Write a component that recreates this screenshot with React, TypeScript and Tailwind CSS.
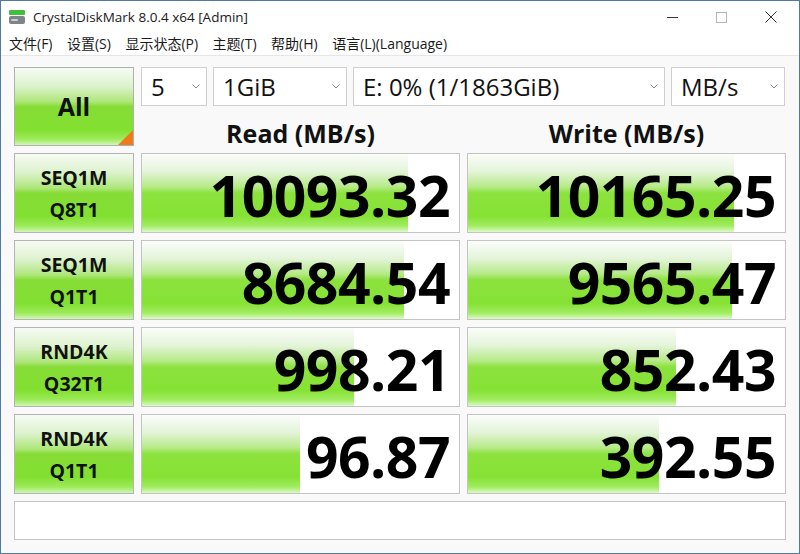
import React from "react";

const rows = [
  { a: "SEQ1M", b: "Q8T1", read: "10093.32", rp: 83.9, write: "10165.25", wp: 83.9 },
  { a: "SEQ1M", b: "Q1T1", read: "8684.54", rp: 82.6, write: "9565.47", wp: 83.3 },
  { a: "RND4K", b: "Q32T1", read: "998.21", rp: 66.9, write: "852.43", wp: 65.6 },
  { a: "RND4K", b: "Q1T1", read: "96.87", rp: 49.8, write: "392.55", wp: 60.3 },
];

const menus = ["文件(F)", "设置(S)", "显示状态(P)", "主题(T)", "帮助(H)", "语言(L)(Language)"];

function Chevron() {
  return (
    <svg width="8" height="5" viewBox="0 0 8 5" className="shrink-0">
      <path d="M0.5 0.5 L4 4 L7.5 0.5" fill="none" stroke="#8a8a8a" strokeWidth="1" />
    </svg>
  );
}

function Combo({ text, w }: { text: string; w: string }) {
  return (
    <div className={`${w} h-full flex items-center justify-between bg-white border border-[#cfcfcf] pl-[9px] pr-[6px]`}>
      <span className="text-[24px] leading-none text-[#111]">{text}</span>
      <Chevron />
    </div>
  );
}

function Score({ value, pct }: { value: string; pct: number }) {
  return (
    <div className="relative h-full bg-white border border-[#c4c4c4] flex items-center justify-end pr-[9px] overflow-hidden">
      <div
        className="absolute left-0 top-0 bottom-0 bg-[linear-gradient(to_bottom,#fbfdfa_0%,#e4f4da_22%,#b6ea88_42%,#8ce23e_50%,#86e234_80%,#a0ec60_92%,#dcf9c8_100%)]"
        style={{ width: `${pct}%` }}
      />
      <span className="relative font-bold text-[57px] leading-none tracking-[-0.5px] text-black mt-[4px]">{value}</span>
    </div>
  );
}

export default function App() {
  return (
    <div className="w-[800px] h-[554px] border border-[#4f7aa6] bg-[#f9f9f9] flex flex-col overflow-hidden font-['Open_Sans','Noto_Sans','Noto_Sans_CJK_SC',sans-serif] text-[#111]">
      <div className="h-[32px] bg-white flex items-center shrink-0">
        <svg width="18" height="16" viewBox="0 0 18 16" className="ml-[7px]">
          <rect x="1" y="1" width="16" height="5" rx="1" fill="#3fbf3a" />
          <rect x="1" y="7" width="16" height="8" rx="2" fill="#7d858c" />
          <rect x="3" y="10" width="7" height="2" rx="1" fill="#c9ced2" />
        </svg>
        <span className="ml-[7px] text-[13.5px] text-[#1a1a1a]">CrystalDiskMark 8.0.4 x64 [Admin]</span>
        <div className="ml-auto flex h-full pr-[4px]">
          <div className="w-[49px] h-full flex items-center justify-center">
            <svg width="11" height="11" viewBox="0 0 11 11"><path d="M0 5.5 H11" stroke="#333" strokeWidth="1" /></svg>
          </div>
          <div className="w-[49px] h-full flex items-center justify-center">
            <svg width="11" height="11" viewBox="0 0 11 11"><rect x="0.5" y="0.5" width="10" height="10" fill="none" stroke="#b5b5b5" strokeWidth="1" /></svg>
          </div>
          <div className="w-[49px] h-full flex items-center justify-center">
            <svg width="12" height="12" viewBox="0 0 12 12"><path d="M0.5 0.5 L11.5 11.5 M11.5 0.5 L0.5 11.5" stroke="#333" strokeWidth="1" /></svg>
          </div>
        </div>
      </div>

      <div className="h-[23px] bg-white border-b border-[#e6e6e6] flex items-center gap-[14.5px] pl-[8px] shrink-0">
        {menus.map((m) => (
          <span key={m} className="text-[14px] leading-none text-[#1a1a1a]">{m}</span>
        ))}
      </div>

      <div className="flex flex-col px-[13px] pt-[11px]">
        <div className="flex gap-[7px] h-[79px]">
          <div className="relative w-[120px] h-full border border-[#b0b0b0] flex items-center justify-center bg-[linear-gradient(to_bottom,#f6fbf3_0%,#dcf2cc_24%,#ace678_44%,#86dc36_50%,#82e030_80%,#9cea58_92%,#d0f6b8_100%)] overflow-hidden">
            <span className="font-bold text-[25px] leading-none">All</span>
            <div className="absolute right-0 bottom-0 w-0 h-0 border-l-[15px] border-l-transparent border-b-[15px] border-b-[#f07a1a]" />
          </div>
          <div className="flex-1 flex flex-col">
            <div className="h-[39px] flex gap-[6px]">
              <Combo text="5" w="w-[66px]" />
              <Combo text="1GiB" w="w-[134px]" />
              <Combo text="E: 0% (1/1863GiB)" w="w-[312px]" />
              <Combo text="MB/s" w="w-[114px]" />
            </div>
            <div className="flex-1 grid grid-cols-2 gap-[7px] items-center">
              <div className="text-center font-bold text-[25px] leading-none pt-[14px]">Read (MB/s)</div>
              <div className="text-center font-bold text-[25px] leading-none pt-[14px]">Write (MB/s)</div>
            </div>
          </div>
        </div>

        {rows.map((r, i) => (
          <div key={i} className="grid grid-cols-[120px_1fr_1fr] gap-[7px] h-[80px] mt-[7px]">
            <div className="border border-[#b4b4b4] flex flex-col items-center justify-center bg-[linear-gradient(to_bottom,#f6fbf3_0%,#dcf2cc_24%,#ace678_44%,#86dc36_50%,#82e030_80%,#9cea58_92%,#d0f6b8_100%)]">
              <span className="font-bold text-[19.5px] leading-[32px] pt-[2px]">{r.a}</span>
              <span className="font-bold text-[19.5px] leading-[32px]">{r.b}</span>
            </div>
            <Score value={r.read} pct={r.rp} />
            <Score value={r.write} pct={r.wp} />
          </div>
        ))}

        <div className="h-[39px] mt-[7px] bg-white border border-[#c4c4c4]" />
      </div>
    </div>
  );
}
